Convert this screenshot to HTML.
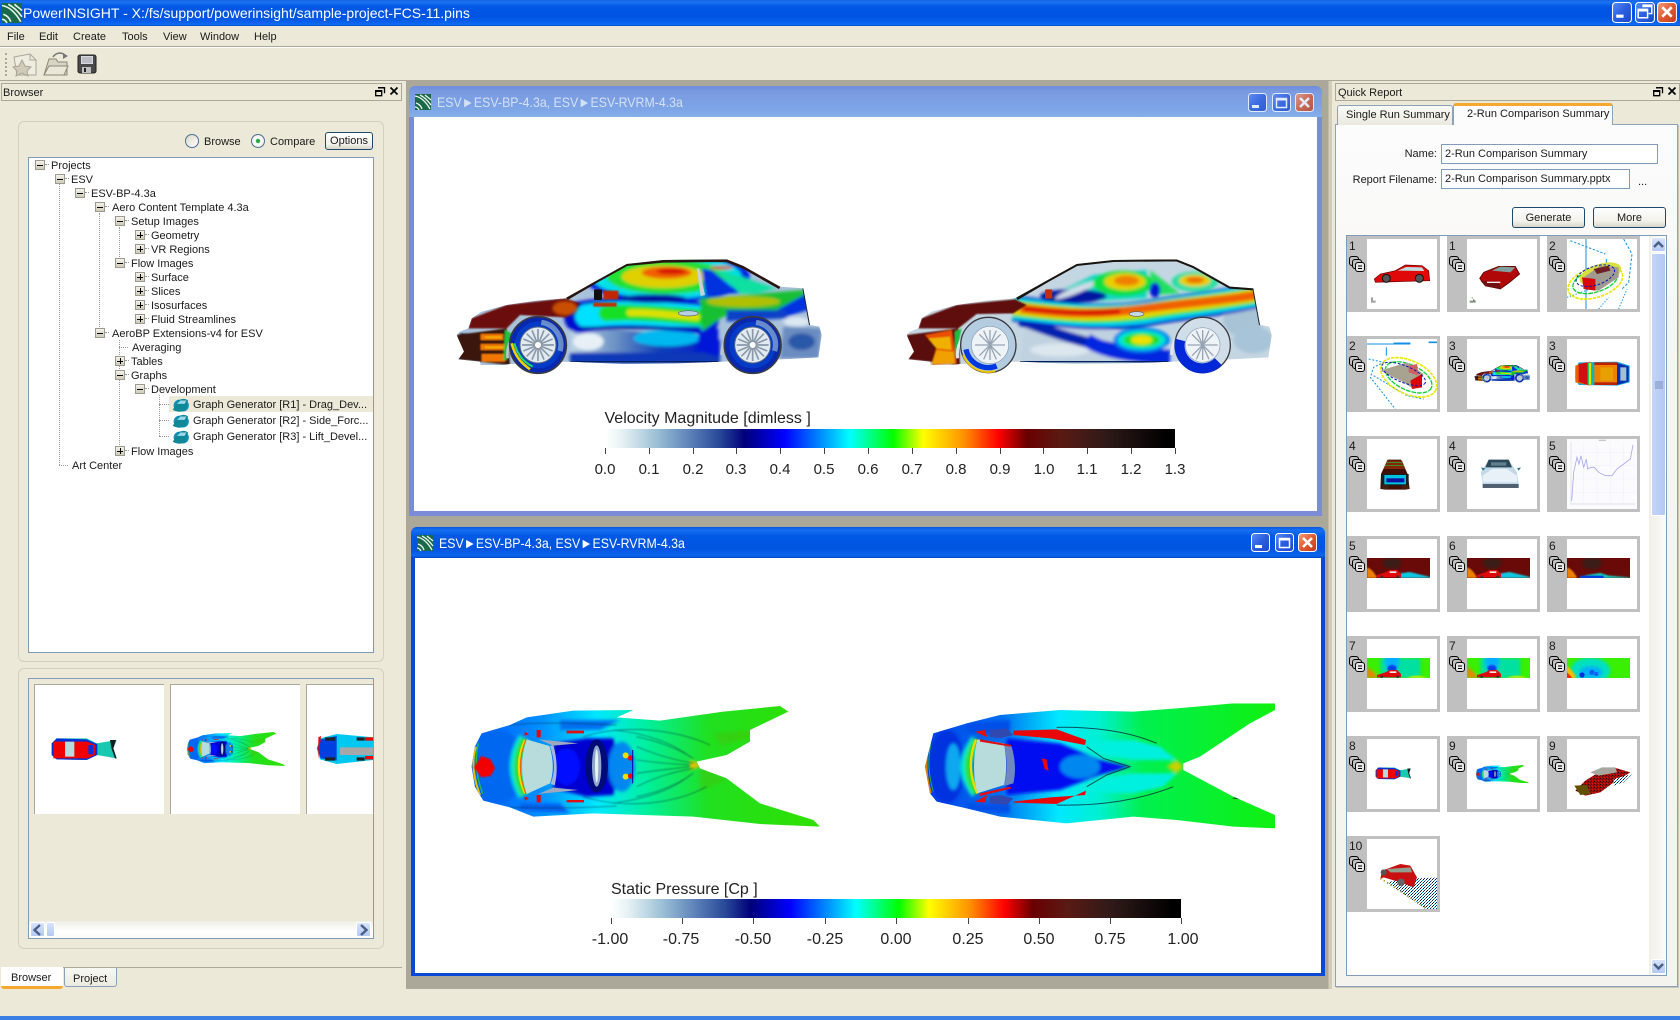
<!DOCTYPE html>
<html><head><meta charset="utf-8"><title>PowerINSIGHT</title>
<style>
html,body{margin:0;padding:0;width:1680px;height:1020px;overflow:hidden;background:#ece9d8}
div{position:absolute;box-sizing:border-box}
.t{position:absolute;white-space:nowrap;font:11px/14px "Liberation Sans",sans-serif;color:#1a1a1a;margin-top:1px}
.m{width:10px;height:10px;border:1px solid #9a9a90;background:linear-gradient(#000,#000) center/6px 1px no-repeat,linear-gradient(#f4f2ea,#d0ccb8)}
.p{background:linear-gradient(#000,#000) center/6px 1px no-repeat,linear-gradient(#000,#000) center/1px 6px no-repeat,linear-gradient(#f4f2ea,#d0ccb8)}
.m::after{content:"";position:absolute;left:9px;top:3px;width:4px;border-top:1px dotted #999}
.v{border-left:1px dotted #999;width:1px}
.h{border-top:1px dotted #999;height:1px}
.btn{border:1px solid #1c4a6e;border-radius:3px;background:linear-gradient(#fff,#f2f1ea 70%,#d8d6c8);font:11px/21px "Liberation Sans",sans-serif;text-align:center;color:#1a1a1a}
.inp{background:#fff;border:1px solid #7f9db9;font:11px/19px "Liberation Sans",sans-serif;padding-left:3px;color:#1a1a1a;white-space:nowrap}
.dock{border:1px solid #aca899;background:#ece9d8}
.sb{background:linear-gradient(180deg,#d8e4fa,#b4c8f4);border:1px solid #fff;border-radius:2px}
.wt{font-size:14px;line-height:16px;transform:scaleX(.882);transform-origin:0 0;margin-top:0}
</style></head><body>

<!-- Title bar -->
<div style="left:0;top:0;width:1680px;height:26px;background:linear-gradient(#1464e4,#1a72f0 8%,#0058e6 25%,#0054e0 65%,#0a62ee 88%,#1070f4 94%,#0044c4)"></div>
<span class="t" style="left:23px;top:5px;margin-top:0;font-size:14px;line-height:16px;color:#fff">PowerINSIGHT - X:/fs/support/powerinsight/sample-project-FCS-11.pins</span>

<!-- Menu -->
<span class="t" style="left:7px;top:29px">File</span>
<span class="t" style="left:39px;top:29px">Edit</span>
<span class="t" style="left:73px;top:29px">Create</span>
<span class="t" style="left:122px;top:29px">Tools</span>
<span class="t" style="left:163px;top:29px">View</span>
<span class="t" style="left:200px;top:29px">Window</span>
<span class="t" style="left:254px;top:29px">Help</span>
<div style="left:0;top:46px;width:1680px;height:1px;background:#aca899"></div>
<div style="left:0;top:47px;width:1680px;height:1px;background:#fff"></div>
<div style="left:5px;top:53px;height:23px;width:1px;border-left:2px dotted #aca899"></div>
<div style="left:0;top:80px;width:1680px;height:1px;background:#aca899"></div>

<!-- Left dock -->
<div class="dock" style="left:1px;top:83px;width:401px;height:18px"></div>
<span class="t" style="left:3px;top:85px">Browser</span>
<div style="left:18px;top:121px;width:366px;height:541px;border:1px solid #d3d1bd;border-radius:6px"></div>
<div style="left:18px;top:668px;width:366px;height:281px;border:1px solid #d3d1bd;border-radius:6px"></div>

<div style="left:185px;top:134px;width:14px;height:14px;border-radius:50%;border:1px solid #4a6f96;background:linear-gradient(135deg,#dcd9c8,#fff)"></div>
<span class="t" style="left:204px;top:134px">Browse</span>
<div style="left:251px;top:134px;width:14px;height:14px;border-radius:50%;border:1px solid #4a6f96;background:radial-gradient(circle,#2fa84a 0,#2fa84a 22%,#fff 30%,#e8e6da 100%)"></div>
<span class="t" style="left:270px;top:134px">Compare</span>
<div class="btn" style="left:325px;top:132px;width:48px;height:18px;line-height:17px">Options</div>

<!-- Tree -->
<div style="left:28px;top:157px;width:346px;height:496px;background:#fff;border:1px solid #7f9db9"></div>
<div style="left:169px;top:396px;width:204px;height:16px;background:#ece9d8"></div>
<div class="v" style="left:59px;top:184px;height:281px"></div>
<div class="h" style="left:59px;top:465px;width:9px"></div>
<div class="v" style="left:99px;top:213px;height:120px"></div>
<div class="v" style="left:119px;top:227px;height:36px"></div>
<div class="v" style="left:119px;top:340px;height:111px"></div>
<div class="h" style="left:119px;top:347px;width:9px"></div>
<div class="v" style="left:159px;top:395px;height:41px"></div>
<div class="h" style="left:159px;top:404px;width:10px"></div>
<div class="h" style="left:159px;top:420px;width:10px"></div>
<div class="h" style="left:159px;top:436px;width:10px"></div>

<div class="m" style="left:35px;top:160px"></div><span class="t" style="left:51px;top:158px">Projects</span>
<div class="m" style="left:55px;top:174px"></div><span class="t" style="left:71px;top:172px">ESV</span>
<div class="m" style="left:75px;top:188px"></div><span class="t" style="left:91px;top:186px">ESV-BP-4.3a</span>
<div class="m" style="left:95px;top:202px"></div><span class="t" style="left:112px;top:200px">Aero Content Template 4.3a</span>
<div class="m" style="left:115px;top:216px"></div><span class="t" style="left:131px;top:214px">Setup Images</span>
<div class="m p" style="left:135px;top:230px"></div><span class="t" style="left:151px;top:228px">Geometry</span>
<div class="m p" style="left:135px;top:244px"></div><span class="t" style="left:151px;top:242px">VR Regions</span>
<div class="m" style="left:115px;top:258px"></div><span class="t" style="left:131px;top:256px">Flow Images</span>
<div class="m p" style="left:135px;top:272px"></div><span class="t" style="left:151px;top:270px">Surface</span>
<div class="m p" style="left:135px;top:286px"></div><span class="t" style="left:151px;top:284px">Slices</span>
<div class="m p" style="left:135px;top:300px"></div><span class="t" style="left:151px;top:298px">Isosurfaces</span>
<div class="m p" style="left:135px;top:314px"></div><span class="t" style="left:151px;top:312px">Fluid Streamlines</span>
<div class="m" style="left:95px;top:328px"></div><span class="t" style="left:112px;top:326px">AeroBP Extensions-v4 for ESV</span>
<span class="t" style="left:132px;top:340px">Averaging</span>
<div class="m p" style="left:115px;top:356px"></div><span class="t" style="left:131px;top:354px">Tables</span>
<div class="m" style="left:115px;top:370px"></div><span class="t" style="left:131px;top:368px">Graphs</span>
<div class="m" style="left:135px;top:384px"></div><span class="t" style="left:151px;top:382px">Development</span>
<span class="t" style="left:193px;top:397px">Graph Generator [R1] - Drag_Dev...</span>
<span class="t" style="left:193px;top:413px">Graph Generator [R2] - Side_Forc...</span>
<span class="t" style="left:193px;top:429px">Graph Generator [R3] - Lift_Devel...</span>
<div class="m p" style="left:115px;top:446px"></div><span class="t" style="left:131px;top:444px">Flow Images</span>
<span class="t" style="left:72px;top:458px">Art Center</span>

<!-- Browser thumbnails -->
<div style="left:28px;top:678px;width:346px;height:261px;background:#ece9d8;border:1px solid #7f9db9"></div>
<div style="left:34px;top:684px;width:130px;height:130px;background:#fff;border-left:1px solid #aca899;border-top:1px solid #aca899"></div>
<div style="left:170px;top:684px;width:130px;height:130px;background:#fff;border-left:1px solid #aca899;border-top:1px solid #aca899"></div>
<div style="left:306px;top:684px;width:67px;height:130px;background:#fff;border-left:1px solid #aca899;border-top:1px solid #aca899"></div>
<div style="left:29px;top:921px;width:344px;height:17px;background:linear-gradient(#efeee6,#fff 60%,#fbfbf8)"></div>
<div class="sb" style="left:30px;top:922px;width:15px;height:15px"></div>
<div class="sb" style="left:46px;top:922px;width:9px;height:15px"></div>
<div class="sb" style="left:356px;top:922px;width:15px;height:15px"></div>

<!-- Bottom tabs -->
<div style="left:63px;top:967px;width:339px;height:1px;background:#aca899"></div>
<div style="left:1px;top:967px;width:62px;height:22px;background:#fff;border-bottom:3px solid #f7a830;border-radius:0 0 3px 3px"></div>
<span class="t" style="left:11px;top:970px">Browser</span>
<div style="left:64px;top:968px;width:53px;height:19px;background:linear-gradient(#f8f8f4,#ecebe0);border:1px solid #8aa0b8;border-top:0;border-radius:0 0 3px 3px"></div>
<span class="t" style="left:73px;top:971px">Project</span>

<!-- MDI area -->
<div style="left:406px;top:81px;width:926px;height:908px;background:#aca899"></div>
<div style="left:1326px;top:81px;width:6px;height:908px;background:linear-gradient(90deg,#aca899 0 40%,#d2ceba 40%)"></div>

<!-- Inactive window -->
<div style="left:409px;top:86px;width:913px;height:430px;background:#7a8cd8;border-radius:6px 6px 0 0"></div>
<div style="left:409px;top:86px;width:913px;height:31px;background:linear-gradient(#6e8ede,#7b9be0 20%,#7ca4e6 70%,#86aeea);border-radius:6px 6px 0 0"></div>
<div style="left:414px;top:117px;width:903px;height:394px;background:#fff"></div>
<span class="t wt" style="left:437px;top:94px;color:#d4e0f6">ESV►ESV-BP-4.3a, ESV►ESV-RVRM-4.3a</span>

<!-- Active window -->
<div style="left:411px;top:527px;width:914px;height:449px;background:#0a48d8;border-radius:6px 6px 0 0"></div>
<div style="left:411px;top:527px;width:914px;height:31px;background:linear-gradient(#0a56e0,#1570f0 10%,#0058e4 30%,#0054e0 70%,#0a66ee 92%,#0048cc);border-radius:6px 6px 0 0"></div>
<div style="left:415px;top:558px;width:906px;height:415px;background:#fff"></div>
<span class="t wt" style="left:439px;top:535px;color:#fff">ESV►ESV-BP-4.3a, ESV►ESV-RVRM-4.3a</span>

<!-- Quick Report -->
<div class="dock" style="left:1335px;top:83px;width:345px;height:18px"></div>
<span class="t" style="left:1338px;top:85px">Quick Report</span>
<div style="left:1335px;top:124px;width:343px;height:863px;background:linear-gradient(#fcfcfd,#f6f5f0 30%,#f4f3ee);border:1px solid #8ca2b8;box-shadow:1px 1px 0 #c8c5b4"></div>
<div style="left:1337px;top:105px;width:116px;height:20px;background:linear-gradient(#fafaf6,#eceadf);border:1px solid #8ca2b8;border-bottom:0;border-radius:3px 3px 0 0"></div>
<span class="t" style="left:1346px;top:107px">Single Run Summary</span>
<div style="left:1453px;top:103px;width:160px;height:22px;background:#fcfcfd;border-left:1px solid #8ca2b8;border-right:1px solid #8ca2b8;border-top:3px solid #f7a830;border-radius:3px 3px 0 0"></div>
<span class="t" style="left:1467px;top:106px">2-Run Comparison Summary</span>
<span class="t" style="right:243px;top:146px">Name:</span>
<div class="inp" style="left:1441px;top:144px;width:217px;height:20px">2-Run Comparison Summary</div>
<span class="t" style="right:243px;top:172px">Report Filename:</span>
<div class="inp" style="left:1441px;top:169px;width:189px;height:20px">2-Run Comparison Summary.pptx</div>
<span class="t" style="left:1638px;top:174px">...</span>
<div class="btn" style="left:1512px;top:207px;width:73px;height:21px">Generate</div>
<div class="btn" style="left:1593px;top:207px;width:73px;height:21px">More</div>
<div style="left:1346px;top:235px;width:321px;height:741px;background:#fff;border:1px solid #7f9db9"></div>
<div style="left:1649px;top:236px;width:17px;height:739px;background:linear-gradient(90deg,#f0efe8,#fbfbf8)"></div>
<div class="sb" style="left:1651px;top:237px;width:15px;height:15px"></div>
<div class="sb" style="left:1651px;top:253px;width:15px;height:263px;background:linear-gradient(90deg,#c4d4f6,#b4c8f4)"></div>
<div class="sb" style="left:1651px;top:959px;width:15px;height:15px"></div>

<!-- Bottom strip -->
<div style="left:0;top:1016px;width:1680px;height:4px;background:#3a80e4"></div>

<svg width="1680" height="1020" viewBox="0 0 1680 1020" style="position:absolute;left:0;top:0" font-family="Liberation Sans, sans-serif">
<defs>
<filter id="b5" x="-20%" y="-20%" width="140%" height="140%"><feGaussianBlur stdDeviation="5"/></filter>
<filter id="b2" x="-20%" y="-20%" width="140%" height="140%"><feGaussianBlur stdDeviation="2"/></filter>
<linearGradient id="cm" x1="0" x2="1" y1="0" y2="0">
<stop offset="0" stop-color="#fff"/><stop offset=".03" stop-color="#e6f2f4"/><stop offset=".09" stop-color="#9cc0d6"/><stop offset=".15" stop-color="#5a80b8"/><stop offset=".2" stop-color="#284a98"/><stop offset=".245" stop-color="#00007a"/><stop offset=".315" stop-color="#0000ff"/><stop offset=".38" stop-color="#0090ff"/><stop offset=".43" stop-color="#00ffff"/><stop offset=".505" stop-color="#00ff00"/><stop offset=".558" stop-color="#ffff00"/><stop offset=".63" stop-color="#ff9000"/><stop offset=".69" stop-color="#ff0000"/><stop offset=".74" stop-color="#6a0000"/><stop offset=".8" stop-color="#5a1a14"/><stop offset=".88" stop-color="#2e1a18"/><stop offset=".985" stop-color="#000"/>
</linearGradient>
<linearGradient id="bb" x1="0" y1="0" x2="1" y2="1"><stop offset="0" stop-color="#5a8cf4"/><stop offset=".5" stop-color="#2a5ee0"/><stop offset="1" stop-color="#1a48c8"/></linearGradient>
<linearGradient id="rb" x1="0" y1="0" x2="1" y2="1"><stop offset="0" stop-color="#f0a080"/><stop offset=".5" stop-color="#e05a30"/><stop offset="1" stop-color="#c03a1a"/></linearGradient>
<linearGradient id="lg1" gradientUnits="userSpaceOnUse" x1="490" x2="920" y1="0" y2="0"><stop offset="0" stop-color="#b8d0e4"/><stop offset=".3" stop-color="#6a90c4"/><stop offset=".6" stop-color="#1040b8"/><stop offset="1" stop-color="#0018d0"/></linearGradient>
<linearGradient id="g3" gradientUnits="userSpaceOnUse" x1="35" x2="1080" y1="0" y2="0"><stop offset="0" stop-color="#0058ff"/><stop offset=".2" stop-color="#0090ff"/><stop offset=".36" stop-color="#00e8ff"/><stop offset=".5" stop-color="#00f0a0"/><stop offset=".68" stop-color="#20e020"/><stop offset="1" stop-color="#30e000"/></linearGradient>
<linearGradient id="g4" gradientUnits="userSpaceOnUse" x1="75" x2="1125" y1="0" y2="0"><stop offset="0" stop-color="#0040e8"/><stop offset=".22" stop-color="#0070f0"/><stop offset=".38" stop-color="#00e8ff"/><stop offset=".5" stop-color="#00f0d0"/><stop offset=".62" stop-color="#00f050"/><stop offset="1" stop-color="#10f010"/></linearGradient>
<pattern id="sp" width="9" height="9" patternUnits="userSpaceOnUse"><rect width="9" height="9" fill="#fff"/><rect x="0" y="0" width="3" height="3" fill="#003080"/><rect x="6" y="3" width="3" height="3" fill="#101030"/><rect x="3" y="6" width="3" height="3" fill="#00a0c0"/></pattern>
<pattern id="sp2" width="9" height="9" patternUnits="userSpaceOnUse"><rect width="9" height="9" fill="#a01008"/><rect x="0" y="0" width="3" height="3" fill="#200808"/><rect x="6" y="3" width="3" height="3" fill="#5a0808"/><rect x="3" y="6" width="3" height="3" fill="#e01010"/></pattern>
<clipPath id="c1"><path id="o1" d="M140 765L150 755L175 745L185 715L215 695L290 675L380 662L465 655L560 602L650 552L760 540L950 538L1000 558L1110 620L1180 625L1200 735L1228 740L1235 765L1225 832L1110 838L940 845L800 850L640 852L480 845L300 852L280 855L212 855L210 845L145 838L162 815Z"/></clipPath>
<clipPath id="c2"><path transform="translate(-60 -480)" d="M140 765L150 755L175 745L185 715L215 695L290 675L380 662L465 655L560 602L650 552L760 540L950 538L1000 558L1110 620L1180 625L1200 735L1228 740L1235 765L1225 832L1110 838L940 845L800 850L640 852L480 845L300 852L280 855L212 855L210 845L145 838L162 815Z"/></clipPath>
<clipPath id="c3"><path d="M35 260L45 200L65 160L150 135L200 112L340 92L520 90L470 112L600 122L790 95L960 78L985 95L870 150L870 185L800 225L710 245L720 265L800 295L900 370L1060 420L1080 440L900 432L700 410L400 400L220 410L150 382L70 362L45 320Z"/></clipPath>
<clipPath id="c4"><path d="M75 260L100 160L200 130L300 105L480 90L700 95L830 85L1000 70L1125 70L1125 90L1050 130L900 230L850 250L850 270L1000 350L1125 405L1125 445L1000 440L830 420L700 410L500 430L300 410L200 385L110 365L90 340Z"/></clipPath>
<clipPath id="cb"><rect x="34" y="684" width="339" height="130"/></clipPath>
<clipPath id="ct"><rect width="210" height="210"/></clipPath>
<clipPath id="band"><rect y="57" width="189" height="60"/></clipPath>

<g id="whl">
<circle r="85" fill="#0828b0" stroke="#3a3a40" stroke-width="5"/>
<circle r="70" fill="#0050e0" opacity=".5"/>
<path d="M10-68A68 68 0 0 1 66 18" fill="none" stroke="#8aa8d0" stroke-width="16" opacity=".75"/>
<circle r="54" fill="#e2ebf2" stroke="#5a6a80" stroke-width="3"/>
<g stroke="#8a98a8" stroke-width="5"><path d="M0-48V48M-48 0H48M-34-34L34 34M-34 34L34-34M-18-44L18 44M18-44L-18 44M-44-18L44 18M-44 18L44-18"/></g>
<circle r="10" fill="#fff" stroke="#8a98a8" stroke-width="2"/>
</g>

<g id="car1">
<g clip-path="url(#c1)">
<rect x="130" y="530" width="1120" height="340" fill="#a9c2dc"/>
<g filter="url(#b5)">
<path d="M480 735L930 780L930 850L480 850Z" fill="url(#lg1)"/>
<ellipse cx="535" cy="785" rx="46" ry="26" fill="#e6f0f6"/>
<rect x="480" y="818" width="450" height="32" fill="#1038b8"/>
<ellipse cx="770" cy="775" rx="100" ry="24" fill="#00b8f0"/>
<g fill="none" stroke-linecap="round">
<path d="M510 712C630 690 760 700 880 715" stroke="#0010d0" stroke-width="95"/>
<path d="M530 708C640 692 760 702 870 712" stroke="#00e0ff" stroke-width="70"/>
<path d="M590 700C660 694 760 702 870 712" stroke="#18e028" stroke-width="48"/>
<path d="M660 698C700 696 780 704 860 712" stroke="#e0e000" stroke-width="20"/>
</g>
<rect x="510" y="740" width="360" height="7" fill="#000890"/>
<path d="M870 745L925 745L925 830L860 810Z" fill="#0018d8"/>
<ellipse cx="770" cy="590" rx="250" ry="78" fill="#0020e0"/>
<ellipse cx="770" cy="590" rx="225" ry="66" fill="#00e0e8"/>
<ellipse cx="770" cy="590" rx="180" ry="52" fill="#20e030"/>
<ellipse cx="760" cy="590" rx="125" ry="34" fill="#e0d000"/>
<ellipse cx="770" cy="578" rx="75" ry="18" fill="#f06000"/>
<ellipse cx="785" cy="574" rx="45" ry="9" fill="#d81000"/>
<ellipse cx="730" cy="656" rx="100" ry="13" fill="#0008a0"/>
<path d="M870 655L1180 630L1190 690L1100 690L940 710L875 755Z" fill="#18c030"/>
<ellipse cx="1000" cy="665" rx="110" ry="16" fill="#b0c000"/>
<path d="M1100 690L1190 640L1195 690L1130 710Z" fill="#0030e0"/>
<path d="M950 690L1130 690L1130 715L950 725Z" fill="#1040c8"/>
<ellipse cx="1160" cy="725" rx="40" ry="14" fill="#dce8f2"/>
<path d="M1120 740L1235 745L1225 835L1110 835Z" fill="#6a8cc0"/>
<ellipse cx="1175" cy="785" rx="40" ry="25" fill="#2a58a8"/>
<path d="M905 570L990 640L885 645L875 565Z" fill="#0030e0"/>
<path d="M905 560L1100 625L1040 640L990 640Z" fill="#10e0a0"/>
<ellipse cx="935" cy="563" rx="35" ry="5" fill="#e04000"/>
</g>
<path d="M868 565L885 645L872 648L860 565Z" fill="#c8d0d8"/>
<g filter="url(#b2)">
<path d="M175 745L185 715L290 675L465 655L510 670L470 712L330 705L290 745Z" fill="#6c1008"/>
<path d="M150 760H210V772H150Z" fill="#182030"/>
<path d="M140 765L290 745L300 855L145 838Z" fill="#3a1208"/>
<path d="M212 762H280V780H212ZM212 792H290V810H212ZM215 822H285V845H215Z" fill="#f07800"/>
<path d="M225 770H275V774H225ZM225 800H280V804H225Z" fill="#f8c000"/>
<path d="M285 750L305 760L290 840L280 840Z" fill="#20c040"/>
<rect x="580" y="632" width="45" height="26" fill="#c02800"/>
<rect x="550" y="668" width="70" height="12" fill="#c03000"/>
</g>
<ellipse cx="465" cy="685" rx="38" ry="22" fill="#e06000" filter="url(#b5)" opacity=".8"/>
<path d="M470 655L560 602L650 552L760 542L950 540L1000 560L1110 622" fill="none" stroke="#2a1410" stroke-width="12"/>
<path d="M1180 625L1200 735" fill="none" stroke="#202830" stroke-width="6"/>
<rect x="552" y="628" width="24" height="32" rx="3" fill="#101010"/>
<path d="M480 845H925" stroke="#002060" stroke-width="4"/>
</g>
<ellipse cx="835" cy="700" rx="30" ry="8" fill="#b8d0e0" stroke="#506080" stroke-width="2"/>
<path d="M293 835A92 92 0 0 1 470 790M935 825A92 92 0 0 1 1113 790" fill="none" stroke="#b8c4d0" stroke-width="8"/>
<use href="#whl" x="384" y="795"/>
<path d="M305 790C315 830 335 850 360 868" fill="none" stroke="#f0d000" stroke-width="8"/>
<path d="M313 790C323 825 340 845 368 860" fill="none" stroke="#20e060" stroke-width="6"/>
<use href="#whl" x="1028" y="795"/>
</g>

<g id="car2">
<g clip-path="url(#c2)">
<rect x="70" y="50" width="1120" height="350" fill="#c4d6e2"/>
<g filter="url(#b5)">
<path d="M440 230L860 300L860 370L420 370Z" fill="#c0d2e0"/>
<ellipse cx="1090" cy="240" rx="60" ry="50" fill="#a8c2d6"/>
<ellipse cx="1120" cy="300" rx="60" ry="40" fill="#a8c4d8"/>
<ellipse cx="540" cy="330" rx="90" ry="20" fill="#dbe6ee"/>
<g fill="none">
<path d="M420 240C540 285 640 325 860 345" stroke="#0020b0" stroke-width="32"/>
<path d="M620 300C680 340 780 350 870 350" stroke="#0028e0" stroke-width="42"/>
</g>
<ellipse cx="785" cy="300" rx="85" ry="38" fill="#0080f0"/>
<ellipse cx="785" cy="300" rx="72" ry="29" fill="#00e8d0"/>
<ellipse cx="785" cy="300" rx="55" ry="21" fill="#20e020"/>
<ellipse cx="785" cy="300" rx="32" ry="14" fill="#f0e000"/>
<g fill="none">
<path d="M400 205C500 215 620 245 800 220C900 200 1000 195 1130 165" stroke="#0010c0" stroke-width="78"/>
<path d="M400 205C500 215 620 240 800 218C900 198 1000 192 1130 165" stroke="#00d8ff" stroke-width="64"/>
<path d="M400 205C500 215 620 238 800 215C900 195 1000 190 1130 165" stroke="#18e028" stroke-width="50"/>
<path d="M400 205C500 215 620 236 800 212C900 193 1000 188 1130 165" stroke="#e8d800" stroke-width="38"/>
<path d="M420 205C500 215 620 232 800 205C900 190 1000 186 1130 165" stroke="#f06000" stroke-width="26"/>
<path d="M430 205C500 212 600 225 720 214" stroke="#d81000" stroke-width="14"/>
</g>
<path d="M510 170L640 105L800 90L800 175L600 185Z" fill="#10d8c0"/>
<ellipse cx="580" cy="168" rx="100" ry="20" fill="#0018a0"/>
<ellipse cx="590" cy="150" rx="70" ry="10" fill="#d0dce8" transform="rotate(-22 590 150)"/>
<ellipse cx="730" cy="130" rx="90" ry="38" fill="#10e040"/>
<ellipse cx="735" cy="125" rx="62" ry="25" fill="#e8d000"/>
<ellipse cx="740" cy="122" rx="38" ry="15" fill="#f08000"/>
<path d="M810 90L900 160L820 165Z" fill="#20e060"/>
<ellipse cx="825" cy="150" rx="16" ry="22" fill="#0018d0"/>
<ellipse cx="945" cy="125" rx="70" ry="30" fill="#20e0a0"/>
<ellipse cx="945" cy="122" rx="48" ry="18" fill="#e8d000"/>
<ellipse cx="945" cy="120" rx="28" ry="10" fill="#f07000"/>
</g>
<g filter="url(#b2)">
<path d="M115 265L125 235L230 195L405 178L440 195L400 220L290 222L235 265Z" fill="#5e0e08"/>
<path d="M80 285L235 265L240 375L85 358Z" fill="#5a1008"/>
<path d="M135 285L215 270L230 370L155 375L170 320Z" fill="#e85000"/>
<path d="M145 295L210 290L215 330L170 325Z" fill="#f0b000"/>
<path d="M170 330L220 335L225 370L155 372Z" fill="#f0a000"/>
<path d="M225 275L245 265L225 360Z" fill="#18c040"/>
</g>
<path d="M410 175L500 122L590 72L700 60L890 58L940 78L1050 140L1120 145" fill="none" stroke="#1a1410" stroke-width="12"/>
<path d="M1120 145L1140 255" stroke="#202830" stroke-width="6"/>
<rect x="495" y="148" width="22" height="28" rx="4" fill="#c03010"/>
<path d="M420 365H865" stroke="#002060" stroke-width="4"/>
</g>
<ellipse cx="770" cy="222" rx="22" ry="7" fill="#c8d8e4" stroke="#506080" stroke-width="2"/>
<path d="M233 355A92 92 0 0 1 410 310M875 345A92 92 0 0 1 1053 310" fill="none" stroke="#e0e6ea" stroke-width="9"/>
<circle cx="325" cy="315" r="83" fill="#b4cce0" stroke="#3a3a40" stroke-width="4"/>
<path d="M258 328A68 68 0 0 0 350 378" fill="none" stroke="#0038e0" stroke-width="16"/>
<path d="M250 345A80 80 0 0 0 345 393" fill="none" stroke="#f0c800" stroke-width="6"/>
<circle cx="330" cy="315" r="56" fill="#eef3f8" stroke="#8a9ab0" stroke-width="2"/>
<g stroke="#98a4b4" stroke-width="4"><path d="M330 270V360M285 315H375M298 283L362 347M298 347L362 283M311 272L349 358M349 272L311 358"/></g>
<circle cx="968" cy="315" r="83" fill="#d0deea" stroke="#3a3a40" stroke-width="4"/>
<path d="M901 300A68 68 0 0 0 1015 365" fill="none" stroke="#0028d8" stroke-width="30"/>
<circle cx="968" cy="315" r="52" fill="#eef3f8" stroke="#8a9ab0" stroke-width="2"/>
<g stroke="#98a4b4" stroke-width="4"><path d="M968 270V360M923 315H1013M936 283L1000 347M936 347L1000 283M949 272L987 358M987 272L949 358"/></g>
</g>

<g id="car3">
<g clip-path="url(#c3)">
<rect x="20" y="60" width="1080" height="400" fill="url(#g3)"/>
<g filter="url(#b5)">
<ellipse cx="110" cy="260" rx="90" ry="110" fill="#0068f0"/>
<path d="M300 120L480 120L420 150L300 150Z" fill="#0070f0"/>
<path d="M180 390L330 400L300 370L180 370Z" fill="#0060f0"/>
<path d="M780 195L870 175L870 150L760 160Z" fill="#58b010" opacity=".3"/>
<path d="M720 255L800 300L720 330Z" fill="#58b010" opacity=".3"/>
<path d="M690 240L730 255L690 270Z" fill="#e8c000"/>
<g fill="none">
<path d="M195 175Q145 260 195 345" stroke="#00e8d0" stroke-width="40"/>
<path d="M195 178Q152 260 195 342" stroke="#30e020" stroke-width="24"/>
</g>
<path d="M280 190L380 175L460 175L480 260L460 345L380 350L280 325Z" fill="#0000d0"/>
<ellipse cx="320" cy="260" rx="40" ry="55" fill="#0010ff"/>
<ellipse cx="485" cy="260" rx="40" ry="75" fill="#0088f0"/>
</g>
<path d="M195 180Q158 260 195 340" fill="none" stroke="#f0d800" stroke-width="7"/>
<path d="M198 178Q164 260 198 342" fill="none" stroke="#f06000" stroke-width="3"/>
<path d="M200 178L268 198Q288 260 270 310L200 342Q172 260 200 178Z" fill="#b8dcdc"/>
<path d="M270 198Q292 260 272 312L284 316Q298 260 280 195Z" fill="#a8b8d8"/>
<path d="M235 178L355 190L280 197ZM235 342L355 330L280 323Z" fill="#a0a8c0"/>
<ellipse cx="410" cy="258" rx="34" ry="80" fill="#000a78"/>
<ellipse cx="410" cy="258" rx="14" ry="62" fill="#8ea8cc"/>
<ellipse cx="410" cy="258" rx="5" ry="50" fill="#e8f0f4"/>
<path d="M48 200Q28 262 60 345" fill="none" stroke="#e8c000" stroke-width="6"/>
<path d="M55 190Q38 262 68 340" fill="none" stroke="#20c040" stroke-width="4"/>
<path d="M64 228L92 238L105 265L92 288L64 292L42 262Z" fill="#f00000" filter="url(#b2)"/>
<path d="M195 155l12 8-14 4zM230 150h12v22h-12zM195 362l12-8-14-4zM230 345h12v22h-12z" fill="#f00000"/>
<path d="M320 152h52v8h-52zM320 360h52v7h-52z" fill="#e01010"/>
<circle cx="497" cy="226" r="9" fill="#e8e000"/><circle cx="512" cy="234" r="8" fill="#f00"/>
<circle cx="497" cy="290" r="9" fill="#e8e000"/><circle cx="512" cy="288" r="8" fill="#f00"/>
<path d="M518 210V310" stroke="#0000b0" stroke-width="3"/>
<g fill="none" stroke="#083040" stroke-width="2.500" opacity=".55" filter="url(#b2)">
<path d="M370 170C500 130 650 150 750 195"/><path d="M370 350C500 390 650 370 740 320"/>
<path d="M530 200C600 230 650 240 700 250"/><path d="M530 320C600 285 650 275 700 265"/>
<path d="M460 150C560 160 640 190 690 230"/><path d="M460 370C560 355 640 330 690 285"/>
<path d="M150 135C250 125 350 130 470 135"/><path d="M150 382C250 385 350 385 470 378"/>
<path d="M530 170C600 185 650 205 700 235"/><path d="M530 350C600 335 650 315 700 280"/>
<path d="M530 240C600 250 650 252 690 255"/><path d="M530 280C600 270 650 265 690 260"/>
</g>
</g>
</g>

<g id="car4">
<g clip-path="url(#c4)">
<rect x="60" y="50" width="1090" height="410" fill="url(#g4)"/>
<g filter="url(#b5)">
<ellipse cx="140" cy="260" rx="55" ry="110" fill="#0030e0"/>
<path d="M200 130L330 120L330 160L200 160ZM200 390L330 400L330 370L200 370Z" fill="#0050e8"/>
<ellipse cx="160" cy="260" rx="22" ry="70" fill="#10a8f0"/>
<g fill="none">
<path d="M230 180Q170 260 230 340" stroke="#00e8d0" stroke-width="36"/>
<path d="M230 180Q180 260 230 340" stroke="#30e020" stroke-width="20"/>
</g>
<path d="M320 175L480 190L600 240L690 260L600 285L480 330L320 345Z" fill="#0008f0"/>
<ellipse cx="540" cy="260" rx="60" ry="35" fill="#0088f0"/>
<path d="M560 185L700 180L780 200L830 240L700 240L610 225Z" fill="#00f0e0"/>
<path d="M560 335L700 340L790 320L830 280L700 280L610 295Z" fill="#00f0e0"/>
<path d="M830 240L850 260L830 280L800 260Z" fill="#c8d000"/>
</g>
<path d="M228 178Q195 260 232 340" fill="none" stroke="#f0d800" stroke-width="7"/>
<path d="M232 178L312 190Q325 260 312 315L232 340Q212 260 232 178Z" fill="#b8dcdc"/>
<path d="M312 190Q328 260 312 318L340 310Q352 260 335 200Z" fill="#7088c0"/>
<path d="M85 200Q70 262 92 340" fill="none" stroke="#e08000" stroke-width="7"/>
<path d="M92 195Q78 262 100 335" fill="none" stroke="#20b040" stroke-width="3"/>
<path d="M225 155L262 172L255 150ZM225 365L262 345L255 368Z" fill="#e01010"/>
<path d="M240 178L335 195L330 200L240 185ZM240 340L330 320L335 325L240 348Z" fill="#e01010"/>
<path d="M268 150L320 145L340 165L300 175L268 170ZM268 370L320 375L340 355L300 345L268 350Z" fill="#3048b0"/>
<path d="M340 152L470 148L558 180L555 195L450 175L340 165Z" fill="#e80808"/>
<path d="M340 368L470 372L558 332L555 345L450 352L340 365Z" fill="#e80808" />
<path d="M425 235l15 3 6 35-12-6z" fill="#e80808"/>
<g fill="none" stroke="#0a2a3a" stroke-width="3" opacity=".8">
<path d="M470 142C600 140 700 160 770 190"/><path d="M470 375C600 378 720 360 820 320"/>
<path d="M560 200L610 235L690 260L620 285L560 320"/>
</g>
<path d="M995 355l40 5-15-12z" fill="#104010"/>
</g>
</g>

<g id="topred">
<path d="M155 250L170 235L260 235L290 250L350 240L340 265L350 295L290 285L260 300L170 298L155 285Z" fill="#18c8b0"/>
<path d="M155 250L170 235L260 238L292 252V285L260 300L170 298L155 285Z" fill="#0030d8"/>
<path d="M160 245H262L285 255V285L262 295H160Z" fill="#f00000"/>
<rect x="195" y="245" width="28" height="45" fill="#b8dcdc"/>
<rect x="265" y="255" width="15" height="28" fill="#1030e0"/>
<path d="M330 240h18l-8 25 10 30h-5l-10-28z" fill="#102020"/>
</g>

<g id="wbmin"><path d="M4 12h7v3H4z" fill="#fff"/></g>
<g id="wbmax"><path d="M4.500 5.500h10v9h-10z" fill="none" stroke="#fff" stroke-width="1.500"/><path d="M4 5h11v2.500H4z" fill="#fff"/></g>
<g id="wbcls"><path d="M5 5L14 14M14 5L5 14" stroke="#fff" stroke-width="2.600"/></g>
<g id="wbres"><path d="M7 3h9v8h-3M3 7h9v8H3z" fill="none" stroke="#fff" stroke-width="1.400"/><path d="M7 3h9v2H7zM3 7h9v2H3z" fill="#fff"/></g>

<g id="pi"><rect width="16" height="16" fill="#1a6a48"/><path d="M0 2C6 3 11 8 15 15M5 1C9 3 13 7 16 11M10 1C12 3 14 4 16 6M1 9C4 10 6 12 7 15M0 13C2 13 3 14 4 16" fill="none" stroke="#e8f4ec" stroke-width="1.300"/></g>
<g id="stk"><rect x=".5" y=".5" width="9" height="9" rx="2.500" fill="#c0c0c0" stroke="#000"/><rect x="3.500" y="3.500" width="9" height="9" rx="2.500" fill="#c0c0c0" stroke="#000"/><rect x="6.500" y="6.500" width="9" height="9" rx="2.500" fill="#e8e8e8" stroke="#000"/><path d="M9 10h4M9 12.500h4" stroke="#000"/></g>
<g id="gcell"><rect width="93" height="76" fill="#c0c0c0"/><rect x="20" y="3" width="70" height="70" fill="#fff"/><use href="#stk" x="2" y="20"/></g>

<g id="gen"><rect x="-4" y="-4" width="18" height="14" rx="7" fill="#1090b8"/><path d="M-5 8L2 -3C6 -6 11 -5 13 -3L10 8C5 11 0 11 -5 8Z" fill="#108898"/><path d="M0 1L4 -3H11L9 1Z" fill="#9cd8e8"/></g>

<g id="grn">
<g clip-path="url(#band)">
<rect y="57" width="189" height="60" fill="#38f000"/>
<path d="M40 57H160V117H40Z" fill="#00e0a0" filter="url(#b5)"/>
<ellipse cx="75" cy="60" rx="22" ry="40" fill="#00b0ff" filter="url(#b5)"/>
<ellipse cx="75" cy="88" rx="14" ry="10" fill="#0040e8" filter="url(#b2)"/>
<path d="M0 85C10 90 25 100 32 117H0Z" fill="#f08000" filter="url(#b5)"/>
<path d="M120 117C135 108 160 108 180 117Z" fill="#c8f000" filter="url(#b2)"/>
<path d="M30 108L55 100L68 93H90L102 105V115H30Z" fill="#e00808"/><rect x="68" y="97" width="20" height="5" fill="#e8f0f0"/>
<circle cx="44" cy="113" r="4" fill="#333"/><circle cx="92" cy="113" r="4" fill="#333"/>
</g>
</g>
<g id="smk">
<g clip-path="url(#band)">
<rect y="57" width="189" height="60" fill="#6a0a08"/>
<ellipse cx="75" cy="72" rx="28" ry="18" fill="#3a1a18" filter="url(#b5)"/>
<path d="M0 85C15 90 25 105 30 117H0Z" fill="#f08000" filter="url(#b2)"/>
<path d="M100 103L128 99L190 114V117H100Z" fill="#10c8e0" filter="url(#b2)"/>
<path d="M30 108L55 100L68 93H90L102 105V115H30Z" fill="#e00808"/><rect x="68" y="97" width="20" height="5" fill="#e8f0f0"/>
<circle cx="44" cy="113" r="4" fill="#333"/><circle cx="92" cy="113" r="4" fill="#333"/>
</g>
</g>
</defs>

<!-- App icon -->
<use href="#pi" transform="translate(2 3) scale(1.25)"/>
<!-- Main window buttons -->
<g transform="translate(1612 2) scale(1.05)"><rect x=".5" y=".5" width="18" height="19" rx="3" fill="url(#bb)" stroke="#fff"/><use href="#wbmin"/></g>
<g transform="translate(1635 2) scale(1.05)"><rect x=".5" y=".5" width="18" height="19" rx="3" fill="url(#bb)" stroke="#fff"/><use href="#wbres"/></g>
<g transform="translate(1657 2) scale(1.05)"><rect x=".5" y=".5" width="18" height="19" rx="3" fill="url(#rb)" stroke="#fff"/><use href="#wbcls"/></g>

<!-- Toolbar icons -->
<path d="M14 57L30 54L36 60V75H17Z" fill="#efece0" stroke="#aaa79a"/><path d="M30 54V60H36" fill="none" stroke="#aaa79a"/>
<path d="M22 60L25 66L31 67L27 71L28 76L22 73L16 76L17 71L13 67L19 66Z" fill="#cfcbb8" stroke="#a8a595"/>
<path d="M44 75L49 59H56L58 62H67L67 75Z" fill="#d8d5c4" stroke="#8a8878"/><path d="M44 75L49 66H68L64 75Z" fill="#eae7d8" stroke="#8a8878"/>
<path d="M53 57C56 52 63 52 65 56" fill="none" stroke="#777" stroke-width="1.600"/><path d="M63 53L68 56L63 59Z" fill="#777"/>
<rect x="78" y="55" width="18" height="18" rx="2" fill="#4a4a4a" stroke="#222"/><rect x="81" y="56" width="12" height="8" fill="#d8dce0"/><path d="M82 58h10M82 60h10M82 62h10" stroke="#889" stroke-width=".7"/><rect x="82" y="67" width="9" height="6" fill="#c0c0c0"/><rect x="84" y="68" width="2" height="4" fill="#222"/>

<!-- dock icons -->
<g fill="none" stroke="#000" stroke-width="1.300"><path d="M378 87.700h6.500v5.500M375.700 90.700h6v5h-6z"/><path d="M1656 87.700h6.500v5.500M1653.700 90.700h6v5h-6z"/></g>
<path d="M375 90h7v2h-7zM1653 90h7v2h-7zM378 87h7v1.500h-7zM1656 87h7v1.500h-7z"/>
<path d="M390.500 87.500L397.500 94.500M397.500 87.500L390.500 94.500M1668.500 87.500L1675.500 94.500M1675.500 87.500L1668.500 94.500" stroke="#000" stroke-width="1.700"/>

<!-- Tree icons -->
<use href="#gen" transform="translate(177 403) scale(.85)"/><use href="#gen" transform="translate(177 419) scale(.85)"/><use href="#gen" transform="translate(177 435) scale(.85)"/>

<!-- Scroll arrows -->
<g fill="none" stroke="#4a5f86" stroke-width="2.400"><path d="M40 925L34.500 930L40 935"/><path d="M361 925L366.500 930L361 935"/><path d="M1654 247L1658.500 242.500L1663 247"/><path d="M1654 964L1658.500 968.500L1663 964"/></g>
<path d="M1655 382h8M1655 384h8M1655 386h8M1655 388h8" stroke="#7a90c0"/>

<!-- Sub-window icons & buttons -->
<use href="#pi" transform="translate(415 94)"/>
<g opacity=".78">
<g transform="translate(1248 93)"><rect x=".5" y=".5" width="18" height="18" rx="3" fill="url(#bb)" stroke="#fff"/><use href="#wbmin"/></g>
<g transform="translate(1272 93)"><rect x=".5" y=".5" width="18" height="18" rx="3" fill="url(#bb)" stroke="#fff"/><use href="#wbmax"/></g>
<g transform="translate(1295 93)"><rect x=".5" y=".5" width="18" height="18" rx="3" fill="url(#rb)" stroke="#fff"/><use href="#wbcls"/></g>
</g>
<use href="#pi" transform="translate(417 535)"/>
<g transform="translate(1251 533)"><rect x=".5" y=".5" width="18" height="18" rx="3" fill="url(#bb)" stroke="#fff"/><use href="#wbmin"/></g>
<g transform="translate(1275 533)"><rect x=".5" y=".5" width="18" height="18" rx="3" fill="url(#bb)" stroke="#fff"/><use href="#wbmax"/></g>
<g transform="translate(1298 533)"><rect x=".5" y=".5" width="18" height="18" rx="3" fill="url(#rb)" stroke="#fff"/><use href="#wbcls"/></g>

<!-- Cars -->
<use href="#car1" transform="translate(410 80) scale(.33333)"/>
<use href="#car2" transform="translate(880 240) scale(.33333)"/>
<use href="#car3" transform="translate(460 680) scale(.33333)"/>
<use href="#car4" transform="translate(900 680) scale(.33333)"/>

<!-- Colorbar 1 -->
<text x="604.500" y="423" font-size="16" fill="#222">Velocity Magnitude [dimless ]</text>
<rect x="605" y="429" width="570" height="19" fill="url(#cm)"/>
<g stroke="#444" stroke-width="1"><path d="M605.500 448v6M649.500 448v6M693.500 448v6M736.500 448v6M780.500 448v6M824.500 448v6M868.500 448v6M912.500 448v6M956.500 448v6M1000.500 448v6M1043.500 448v6M1087.500 448v6M1131.500 448v6M1175.500 448v6"/></g>
<g font-size="15" fill="#222" text-anchor="middle">
<text x="605" y="474">0.0</text><text x="649" y="474">0.1</text><text x="693" y="474">0.2</text><text x="736" y="474">0.3</text><text x="780" y="474">0.4</text><text x="824" y="474">0.5</text><text x="868" y="474">0.6</text><text x="912" y="474">0.7</text><text x="956" y="474">0.8</text><text x="1000" y="474">0.9</text><text x="1044" y="474">1.0</text><text x="1087" y="474">1.1</text><text x="1131" y="474">1.2</text><text x="1175" y="474">1.3</text>
</g>

<!-- Colorbar 2 -->
<text x="611" y="894" font-size="16" fill="#222">Static Pressure [Cp ]</text>
<rect x="611" y="899" width="570" height="19" fill="url(#cm)"/>
<g stroke="#444" stroke-width="1"><path d="M611.500 918v6M682.500 918v6M753.500 918v6M825.500 918v6M896.500 918v6M968.500 918v6M1039.500 918v6M1110.500 918v6M1181.500 918v6"/></g>
<g font-size="16" fill="#222" text-anchor="middle">
<text x="610" y="944">-1.00</text><text x="681" y="944">-0.75</text><text x="753" y="944">-0.50</text><text x="825" y="944">-0.25</text><text x="896" y="944">0.00</text><text x="968" y="944">0.25</text><text x="1039" y="944">0.50</text><text x="1110" y="944">0.75</text><text x="1183" y="944">1.00</text>
</g>

<!-- Browser thumb contents -->
<g clip-path="url(#cb)">
<use href="#topred" transform="translate(0 660) scale(.33333)"/>
<use href="#car3" transform="translate(183.700 724.700) scale(.0938)"/>
<g transform="translate(0 660) scale(.33333)">
<path d="M950 265L960 235L1010 222L1120 232V300L1010 312L960 298Z" fill="#00c8f0"/>
<path d="M952 265L962 238L1010 228V302L962 295Z" fill="#0040e0"/>
<path d="M955 232l8-4-8 70zM1095 232h25v10h-25zM1095 288h25v10h-25z" fill="#f00000"/>
<path d="M1020 262H1120V285H1020Z" fill="#a8a8a8"/>
<path d="M975 232h30v10h-30zM975 292h30v10h-30zM1070 232h24v10h-24zM1070 292h24v10h-24z" fill="#222"/>
</g>
</g>

<!-- Report thumbnails -->
<g font-size="12" fill="#1a1a1a">
<g transform="translate(1347 236)"><use href="#gcell"/><text x="2" y="14">1</text></g>
<g transform="translate(1447 236)"><use href="#gcell"/><text x="2" y="14">1</text></g>
<g transform="translate(1547 236)"><use href="#gcell"/><text x="2" y="14">2</text></g>
<g transform="translate(1347 336)"><use href="#gcell"/><text x="2" y="14">2</text></g>
<g transform="translate(1447 336)"><use href="#gcell"/><text x="2" y="14">3</text></g>
<g transform="translate(1547 336)"><use href="#gcell"/><text x="2" y="14">3</text></g>
<g transform="translate(1347 436)"><use href="#gcell"/><text x="2" y="14">4</text></g>
<g transform="translate(1447 436)"><use href="#gcell"/><text x="2" y="14">4</text></g>
<g transform="translate(1547 436)"><use href="#gcell"/><text x="2" y="14">5</text></g>
<g transform="translate(1347 536)"><use href="#gcell"/><text x="2" y="14">5</text></g>
<g transform="translate(1447 536)"><use href="#gcell"/><text x="2" y="14">6</text></g>
<g transform="translate(1547 536)"><use href="#gcell"/><text x="2" y="14">6</text></g>
<g transform="translate(1347 636)"><use href="#gcell"/><text x="2" y="14">7</text></g>
<g transform="translate(1447 636)"><use href="#gcell"/><text x="2" y="14">7</text></g>
<g transform="translate(1547 636)"><use href="#gcell"/><text x="2" y="14">8</text></g>
<g transform="translate(1347 736)"><use href="#gcell"/><text x="2" y="14">8</text></g>
<g transform="translate(1447 736)"><use href="#gcell"/><text x="2" y="14">9</text></g>
<g transform="translate(1547 736)"><use href="#gcell"/><text x="2" y="14">9</text></g>
<g transform="translate(1347 836)"><use href="#gcell"/><text x="2" y="14">10</text></g>
</g>

<!-- thumb contents: local 210 x 210 units -->
<g transform="translate(1367 239) scale(.33333)" clip-path="url(#ct)">
<path d="M22 120L40 105L85 95L115 78L165 80L185 95L188 125L25 130Z" fill="#e00808" stroke="#600" stroke-width="2"/>
<path d="M92 95L118 84L165 85L172 96Z" fill="#c0dcdc"/>
<circle cx="58" cy="118" r="12" fill="#555" stroke="#111" stroke-width="3"/><circle cx="157" cy="118" r="12" fill="#555" stroke="#111" stroke-width="3"/>
<path d="M12 175h6v10h8v6H12z" fill="#a0a0a0"/>
</g>
<g transform="translate(1467 239) scale(.33333)" clip-path="url(#ct)">
<path d="M38 118L50 100L95 82L145 82L158 105L128 130L100 150L55 140Z" fill="#b00808" stroke="#400" stroke-width="2"/>
<path d="M75 95L100 83L145 85L130 100Z" fill="#80a0a0"/>
<path d="M40 125L95 130L100 150L55 142Z" fill="#701010"/>
<path d="M60 128h40v4H60z" fill="#eee"/>
<path d="M12 175h6v10h-10v6h18v-6z" fill="#809080"/>
</g>
<g transform="translate(1567 239) scale(.33333)" clip-path="url(#ct)">
<g fill="none" stroke="#1090e0" stroke-width="3"><path d="M10 5L115 45" stroke-dasharray="7 5"/><path d="M170 0L195 45L185 130L165 150" stroke-dasharray="8 5"/><path d="M57 0V210"/><path d="M118 60V90"/><path d="M0 175L70 150M155 210L180 150M95 210L125 175" stroke-dasharray="4 5"/></g>
<ellipse cx="85" cy="130" rx="85" ry="45" transform="rotate(-18 85 130)" fill="none" stroke="#e8e800" stroke-width="5" stroke-dasharray="10 3"/>
<ellipse cx="85" cy="125" rx="70" ry="34" transform="rotate(-18 85 125)" fill="none" stroke="#10d030" stroke-width="4" stroke-dasharray="14 3"/>
<ellipse cx="100" cy="105" rx="65" ry="30" transform="rotate(-18 100 105)" fill="#d8e040"/>
<path d="M50 115L100 80L155 85L155 115L95 155L50 150Z" fill="#a09a90"/>
<path d="M45 115L85 120L85 155L50 150Z" fill="#d80808"/><path d="M80 90L125 80L130 95L90 105Z" fill="#702020"/>
<ellipse cx="85" cy="110" rx="60" ry="28" transform="rotate(-18 85 110)" fill="none" stroke="#0018c0" stroke-width="3" stroke-dasharray="8 5"/>
</g>

<g transform="translate(1367 339) scale(.33333)" clip-path="url(#ct)">
<path d="M0 15H130" stroke="#1090e0" stroke-width="3"/><path d="M80 13H130M185 10H210" stroke="#1090e0" stroke-width="5"/><path d="M58 25V50" stroke="#1090e0" stroke-width="3"/>
<g fill="none" stroke="#1090e0" stroke-width="3" stroke-dasharray="6 5"><path d="M5 60L50 70L20 85L10 115L85 210"/><path d="M20 110L120 170L170 180"/></g>
<ellipse cx="125" cy="115" rx="90" ry="50" transform="rotate(25 125 115)" fill="none" stroke="#e8e800" stroke-width="5" stroke-dasharray="10 3"/>
<ellipse cx="125" cy="115" rx="75" ry="38" transform="rotate(25 125 115)" fill="none" stroke="#10d030" stroke-width="4" stroke-dasharray="14 3"/>
<path d="M40 95L120 70L170 105L140 150L110 130Z" fill="#a8a290"/><path d="M125 80L150 75L155 110L125 100Z" fill="#d06060"/><path d="M130 125L165 105L165 145L135 150Z" fill="#d80808"/>
<ellipse cx="110" cy="105" rx="70" ry="25" transform="rotate(22 110 105)" fill="none" stroke="#0018c0" stroke-width="3" stroke-dasharray="8 5"/>
</g>
<use href="#car1" transform="translate(1467.200 337.600) scale(.0509)"/>
<g transform="translate(1567 339) scale(.33333)">
<path d="M25 90L35 70L150 68L188 80L188 130L150 140L35 138L25 120Z" fill="#18a8d8"/>
<path d="M25 80L70 68V140L25 130Z" fill="#e86000"/><path d="M35 75L62 70V138L35 128Z" fill="#d01010"/>
<rect x="62" y="72" width="14" height="65" fill="#10d060"/><rect x="66" y="72" width="6" height="65" fill="#e8e000"/>
<path d="M82 78H150V130H82Z" fill="#f08000"/><rect x="100" y="85" width="38" height="40" fill="#e8a000"/><path d="M82 70H150V78H82ZM82 130H150V138H82Z" fill="#c02000"/>
<path d="M150 72L185 82V128L150 138Z" fill="#0030b0"/><path d="M160 85h18v40h-18z" fill="#a0c0d8"/>
</g>

<g transform="translate(1367 439) scale(.33333)">
<path d="M42 105L62 62H102L122 105L128 150L115 152H55L40 150Z" fill="#401008"/>
<path d="M60 65H105L115 90H50Z" fill="#802808"/><path d="M58 70h48M54 80h58" stroke="#20c040" stroke-width="2"/>
<path d="M42 105H125V140H42Z" fill="#1a2018"/><rect x="52" y="108" width="65" height="28" fill="#00c0e0"/><rect x="58" y="118" width="54" height="12" fill="#1010a0"/>
<rect x="45" y="138" width="20" height="12" fill="#402010"/><rect x="105" y="138" width="20" height="12" fill="#402010"/>
</g>
<g transform="translate(1467 439) scale(.33333)">
<path d="M42 100L65 62H125L150 100L155 140L135 147H60L47 140Z" fill="#c0d8e8"/>
<path d="M65 62H125L135 85H55Z" fill="#2a4858"/><path d="M72 70H118V80H72Z" fill="#608090"/>
<path d="M47 110L75 90H120L150 110L150 130L47 130Z" fill="#e8f0f8"/><path d="M47 135H155V147H47Z" fill="#506070"/><path d="M42 85L55 88L48 95ZM150 88L162 85L155 95Z" fill="#207090"/>
</g>
<g transform="translate(1567 439) scale(.33333)">
<rect x="0" y="0" width="210" height="210" fill="#fbfbfd"/>
<path d="M12 10V195H205" fill="none" stroke="#d8d8e0" stroke-width="2"/>
<g stroke="#eeeef4"><path d="M12 40H205M12 80H205M12 120H205M12 160H205M50 10V195M90 10V195M130 10V195M170 10V195"/></g>
<path d="M14 185L20 100L30 55L36 75L42 50L50 85L58 60L62 90L72 85L82 85L95 100L115 110L135 110L150 90L170 75L190 60L198 18" fill="none" stroke="#a8a8f0" stroke-width="2.500"/>
<rect x="95" y="2" width="22" height="4" fill="#c8c8c8"/>
</g>

<!-- smoke band thumbs -->
<use href="#smk" transform="translate(1367 539) scale(.33333)"/>
<use href="#smk" transform="translate(1467 539) scale(.33333)"/>
<g transform="translate(1567 539) scale(.33333)">
<g clip-path="url(#band)">
<rect y="57" width="189" height="60" fill="#6a0a08"/>
<ellipse cx="75" cy="72" rx="30" ry="20" fill="#3a1a18" filter="url(#b5)"/>
<path d="M0 85C15 90 25 105 30 117H0Z" fill="#f08000" filter="url(#b2)"/>
<path d="M35 117L60 108L100 102L125 110L188 115V117Z" fill="#10d0c0" filter="url(#b2)"/>
<path d="M40 110H110V117H40Z" fill="#0040e0"/>
</g>
</g>

<!-- green band thumbs -->
<use href="#grn" transform="translate(1367 639) scale(.33333)"/>
<use href="#grn" transform="translate(1467 639) scale(.33333)"/>
<g transform="translate(1567 639) scale(.33333)">
<g clip-path="url(#band)">
<rect y="57" width="189" height="60" fill="#38f000"/>
<ellipse cx="70" cy="95" rx="60" ry="40" fill="#00e0c0" filter="url(#b5)"/>
<ellipse cx="72" cy="100" rx="35" ry="18" fill="#00b0f8" filter="url(#b5)"/>
<circle cx="45" cy="108" r="8" fill="#0030e0"/><circle cx="75" cy="100" r="8" fill="#1060f0"/><circle cx="88" cy="105" r="6" fill="#1060f0"/>
<path d="M0 80C10 90 22 100 28 117H0Z" fill="#f0c000" filter="url(#b2)"/>
<path d="M0 100C5 105 12 110 15 117H0Z" fill="#f03000"/>
</g>
</g>

<use href="#topred" transform="translate(1347.600 725) scale(.181)"/>
<use href="#car3" transform="translate(1474.200 761) scale(.0507)"/>
<g transform="translate(1567 739) scale(.33333)">
<path d="M25 155L55 125L95 100L140 85L190 100L140 130L100 160L55 170Z" fill="url(#sp2)"/>
<path d="M70 100L105 85L145 85L150 100L95 110Z" fill="#a8a8a0"/>
<path d="M22 140L60 138L70 165L40 168Z" fill="#605000"/>
<path d="M140 120L195 105L170 130L140 140Z" fill="url(#sp)"/>
</g>
<g transform="translate(1367 839) scale(.33333)">
<path d="M110 120L210 115V210H175L60 130Z" fill="url(#sp)"/>
<path d="M40 120L45 95L100 75L130 80L150 115L140 145L100 130L50 115Z" fill="#c81010"/>
<path d="M60 90L130 85L135 100L70 100Z" fill="#90a090"/>
<circle cx="50" cy="100" r="9" fill="#555"/><circle cx="102" cy="130" r="11" fill="#666"/>
<path d="M40 118L175 205" stroke="#a89020" stroke-width="5" stroke-dasharray="4 8"/>
</g>
</svg>
</body></html>
